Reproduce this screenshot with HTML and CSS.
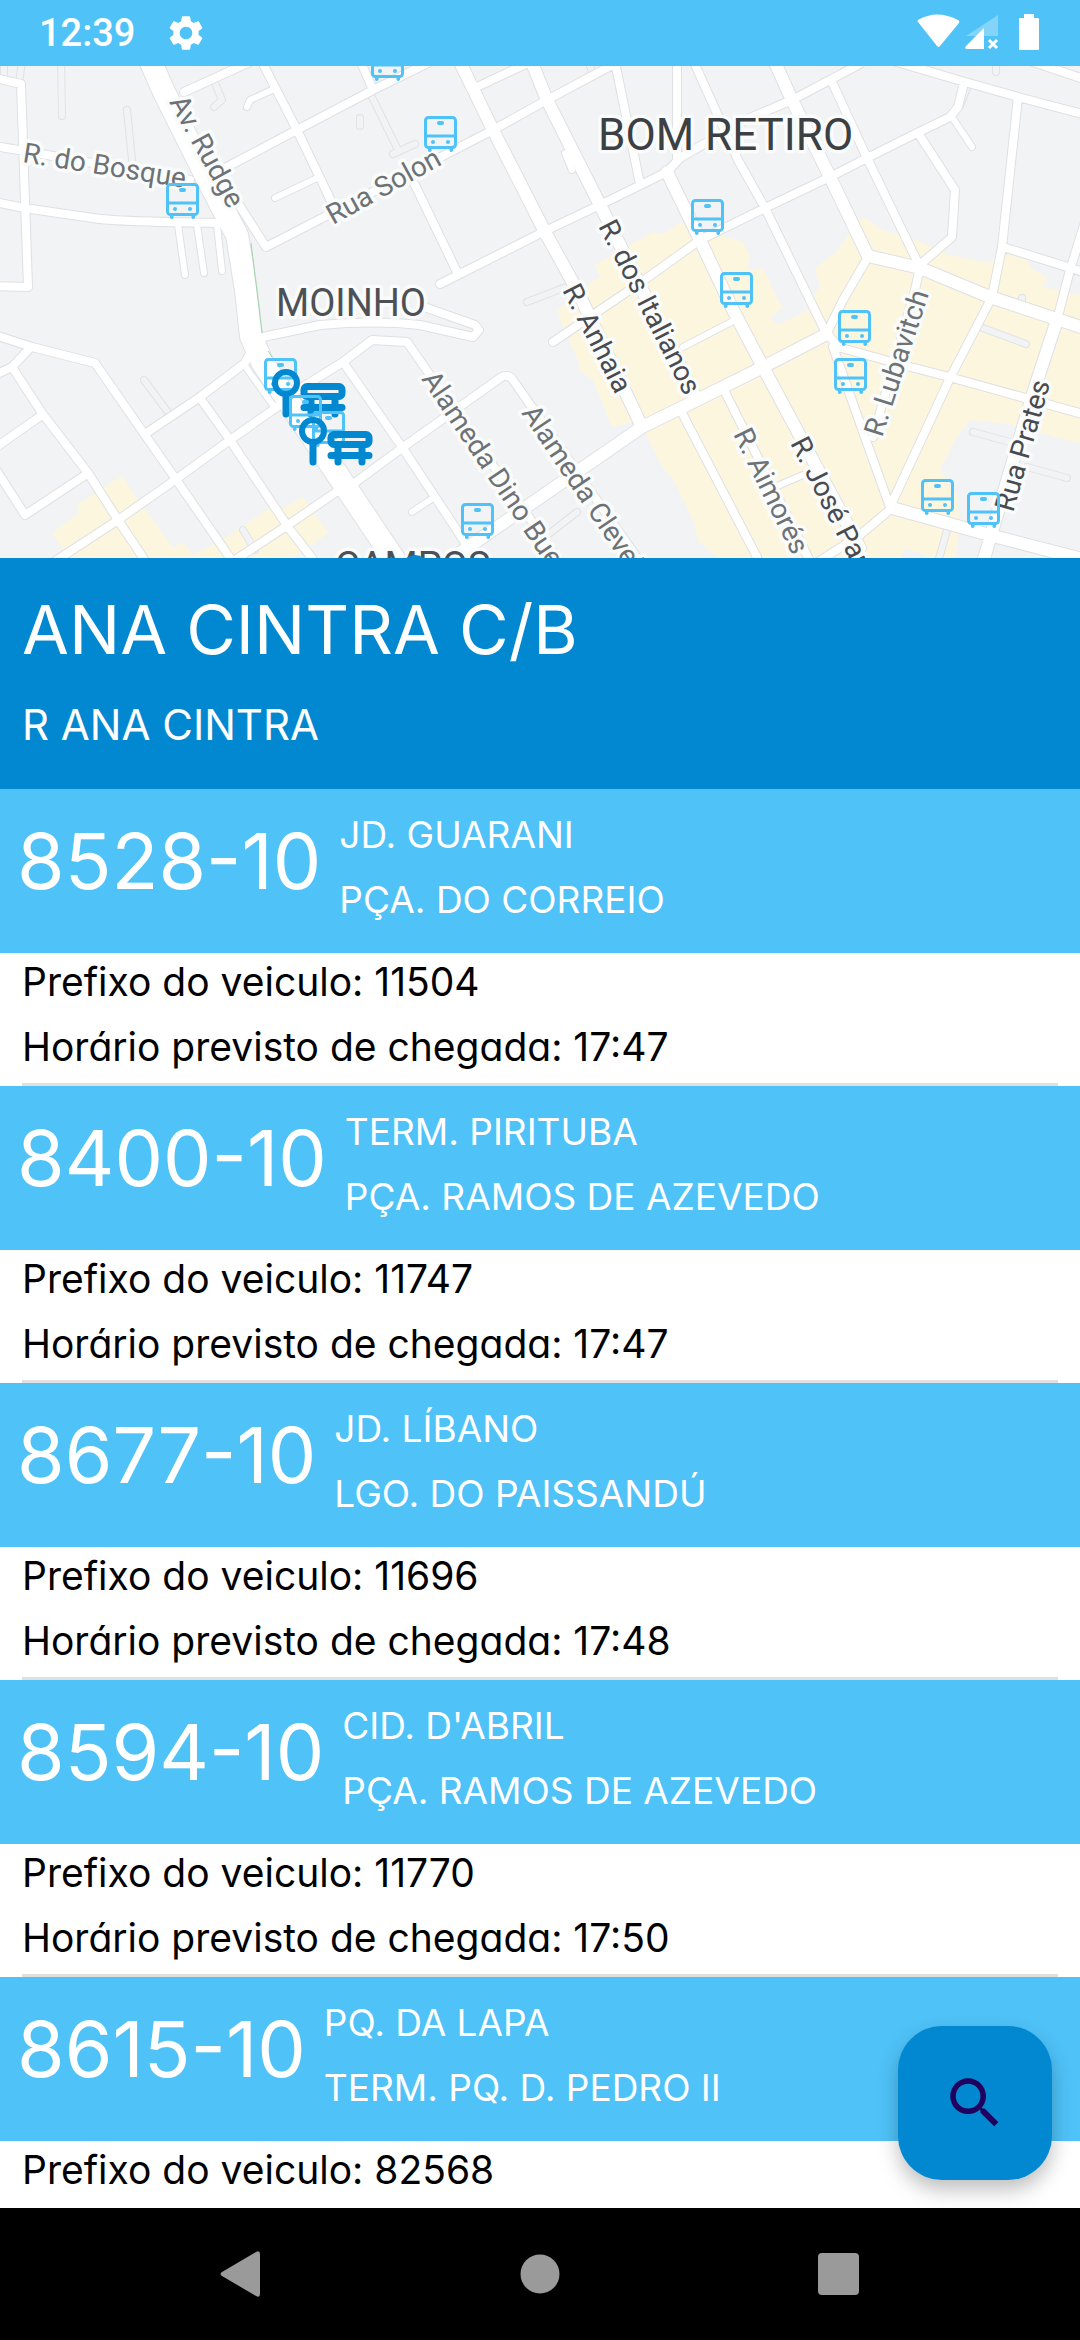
FILE: index.html
```html
<!DOCTYPE html>
<html lang="pt-BR">
<head>
<meta charset="utf-8">
<meta name="viewport" content="width=device-width, initial-scale=1">
<title>Ana Cintra C/B</title>
<link rel="stylesheet" href="styles.css">
</head>
<body>
<header class="status">
  <span class="clock">12:39</span>
  <svg class="gear" viewBox="0 0 24 24" aria-hidden="true"><path d="M19.14 12.94c.04-.3.06-.61.06-.94 0-.32-.02-.64-.07-.94l2.03-1.58c.18-.14.23-.41.12-.61l-1.92-3.32c-.12-.22-.37-.29-.59-.22l-2.39.96c-.5-.38-1.03-.7-1.62-.94l-.36-2.54c-.04-.24-.24-.41-.48-.41h-3.84c-.24 0-.43.17-.47.41l-.36 2.54c-.59.24-1.13.57-1.62.94l-2.39-.96c-.22-.08-.47 0-.59.22L2.74 8.87c-.12.21-.08.47.12.61l2.03 1.58c-.05.3-.09.63-.09.94s.02.64.07.94l-2.03 1.58c-.18.14-.23.41-.12.61l1.92 3.32c.12.22.37.29.59.22l2.39-.96c.5.38 1.03.7 1.62.94l.36 2.54c.05.24.24.41.48.41h3.84c.24 0 .44-.17.47-.41l.36-2.54c.59-.24 1.13-.56 1.62-.94l2.39.96c.22.08.47 0 .59-.22l1.92-3.32c.12-.22.07-.47-.12-.61l-2.01-1.58zM12 15.6c-1.98 0-3.6-1.62-3.6-3.6s1.62-3.6 3.6-3.6 3.6 1.62 3.6 3.6-1.62 3.6-3.6 3.6z"/></svg>
  <svg class="signals" viewBox="0 0 124 38" aria-hidden="true">
    <path d="M1 8Q0 7 1 6Q20-5 41 6Q43 7 42 9L23 32Q21.500 34 20 32Z"/>
    <path opacity=".3" d="M81 2V22H49L78 3Q81 0 81 2Z"/>
    <path class="cut" d="M49 2H81L49 34ZM67 22H82V36H67Z"/>
    <path d="M67 14V35H50Q47 35 49 32Z"/>
    <path class="cross" d="M72 26L80 34M80 26L72 34"/>
    <path d="M107 0H117V4H121Q122 4 122 5V35Q122 36 121 36H103Q102 36 102 35V5Q102 4 103 4H107Z"/>
  </svg>
</header>
<main class="content">
  <svg class="map" viewBox="0 66 1080 492" role="img" aria-label="Mapa">
    <defs>
      <g id="lanes">
        <path d="M61 60L62 116M127 110L132 160M22 60L19 84M4 60V80M215 83L222 100L214 107M372 97L398 150M393 154L415 144M144 380L170 415M243 530L255 550M527 302L566 287M545 537L577 512M360 118V126M980 327L1026 344M973 432L1010 442M1027 467L1067 478M996 62V72M967 88L960 106M1022 298V306M948 527L938 562M590 66L592 72"/>
      </g>
      <g id="small">
        <path d="M178 225L185 275M197 225L204 273M217 225L222 271M247 107L250 100L272 90M275 198L315 179M565 153L572 170M952 117L972 147M245 366L275 408M412 512L433 498M683 347L735 320M775 487L803 475"/>
      </g>
      <g id="streets">
        <path d="M-5 78L21 84L28 287L-5 286M-5 146L24 151L190 180M-5 202L24 208L93 218Q115 222 235 223M184 92L250 62M225 168L295 131L373 90L430 62M262 62L297 130L333 205M360 60L373 90M236 200L266 247L493 130L547 100L616 63M477 87L530 62M415 185L458 274M440 284L458 275L545 231L600 205L667 172L680 158L745 120L792 100L860 64M615 62L640 184M677 60V158M693 60L738 160L765 208L827 335M553 342L640 283L700 240L765 208L830 177L867 158L917 133L950 117L958 107L964 83M832 82L867 158L920 267L915 290L873 437M918 133L955 190L952 237L922 263M890 60L965 82L1018 97L1090 116M1030 61L1090 81M1018 97L1002 247L992 297L950 378L890 507M1003 247L1090 274M1085 222L1070 270L1057 320M868 257L843 300L827 333L838 347L903 365L953 378L1090 416M833 347L867 443L890 507M725 392L812 565M682 413L757 557M818 562L860 535L892 508"/>
        <path d="M-5 335L32 347L95 363L145 435L175 478L235 565M-5 375L12 367L30 348M12 367L42 413L88 473L118 520L148 565M-5 448L42 415M-5 468L25 515L87 474M145 434L200 397L245 363L252 350M54 562L118 520L175 480L230 440L277 407M200 398L230 440L288 527L315 562M235 560L288 525L342 488M263 337L320 325Q375 320 420 325L473 337L479 330L475 325L427 308M290 395L343 362L372 340L407 342L430 375L560 562M343 362L402 447L470 550M345 490L402 448L500 378Q508 373 513 380L640 562"/>
      </g>
      <g id="roads">
        <path d="M458 58L493 130L545 232L577 290L642 427M530 58L547 100L600 205L697 400M667 172L700 240L733 310L763 367L860 548M773 58L792 100L830 177L868 256L920 268L990 297L1090 330M445 563L590 463L642 427L697 400L763 367L825 335M1057 320L1035 387L983 562M892 508L997 537L1090 561"/>
      </g>
      <g id="avenue">
        <path d="M149 58L164 92L212 188L237 235L246 290L251 336L262 362L396 562"/>
      </g>
      <symbol id="bus" viewBox="0 0 33 36">
        <rect class="line" x="1.500" y="1.500" width="30" height="30" rx="3"/>
        <path class="line" d="M2 20H31"/>
        <rect x="13" y="5" width="7" height="4" rx="2"/>
        <circle cx="9" cy="26" r="2"/><circle cx="24" cy="26" r="2"/>
        <path d="M4 32H7.500V35Q5.500 37 4 35ZM25.500 32H29V35Q27 37 25.500 35Z"/>
      </symbol>
      <symbol id="stop" viewBox="0 0 75 50">
        <circle class="line thin" cx="14" cy="14" r="11"/>
        <path class="line" d="M14 27V45M32 38.500H70M39 32V45M63 32V45"/>
        <rect class="line" x="32" y="17.500" width="38" height="10" rx="3"/>
      </symbol>
    </defs>

    <rect class="land" y="66" width="1080" height="492"/>
    <path class="shops" d="M52 533L80 512 76 506 95 493 122 476 137 498 173 548 183 542 193 555 202 550 222 540 270 508 284 508 303 497 328 533 290 560H70Z"/>
    <path class="shops" d="M590 283L600 277 595 265 653 232 663 234 685 220 700 238 720 235 743 242 750 257 747 270 763 268 778 300 783 307 770 318 778 325 808 310 817 290 820 287 815 268 835 253 850 233 863 217 883 230 917 240 950 255 990 263 1003 252 1028 260 1030 268 1047 277 1043 287 1080 295V560H720L697 540 695 525 675 483 660 463 647 437 642 420 612 427 593 380 578 370 580 365 568 337 560 320 557 310Z"/>
    <path class="land" d="M970 420L1015 425 1055 437 1080 443V560H955L960 527 957 495 940 470 955 440ZM900 560L905 548 925 555 930 560Z"/>

    <g class="lane-case"><use href="#lanes"/></g>
    <g class="lane-fill"><use href="#lanes"/></g>
    <g class="case small"><use href="#small"/></g>
    <g class="case streets"><use href="#streets"/></g>
    <g class="case roads"><use href="#roads"/></g>
    <g class="case avenue"><use href="#avenue"/></g>
    <g class="fill small"><use href="#small"/></g>
    <g class="fill streets"><use href="#streets"/></g>
    <g class="fill roads"><use href="#roads"/></g>
    <g class="fill avenue"><use href="#avenue"/></g>
    <path class="park" d="M251 243L258 300L262 333M268 351L272 357"/>

    <g class="label">
      <text class="district" x="598" y="150">BOM RETIRO</text>
      <text class="quarter" x="276" y="316">MOINHO</text>
      <text class="quarter strong" x="335" y="579">CAMPOS</text>
      <text transform="translate(22 162) rotate(9)">R. do Bosque</text>
      <text transform="translate(169 102) rotate(61)">Av. Rudge</text>
      <text transform="translate(333 225) rotate(-29)">Rua Solon</text>
      <text class="strong" transform="translate(598 226) rotate(63)">R. dos Italianos</text>
      <text class="strong" transform="translate(562 290) rotate(63)">R. Anhaia</text>
      <text transform="translate(421 379) rotate(56)">Alameda Dino Bueno</text>
      <text transform="translate(521 413) rotate(56)">Alameda Cleveland</text>
      <text transform="translate(882 438) rotate(-72)">R. Lubavitch</text>
      <text transform="translate(733 434) rotate(64)">R. Aimorés</text>
      <text class="strong" transform="translate(790 443) rotate(63)">R. José Paulino</text>
      <text class="strong" transform="translate(1013 513) rotate(-74)">Rua Prates</text>
    </g>

    <g class="buses">
      <use href="#bus" x="371" y="45" width="33" height="36"/>
      <use href="#bus" x="424" y="116" width="33" height="36"/>
      <use href="#bus" x="166" y="183" width="33" height="36"/>
      <use href="#bus" x="691" y="199" width="33" height="36"/>
      <use href="#bus" x="720" y="272" width="33" height="36"/>
      <use href="#bus" x="838" y="310" width="33" height="36"/>
      <use href="#bus" x="834" y="358" width="33" height="36"/>
      <use href="#bus" x="921" y="479" width="33" height="36"/>
      <use href="#bus" x="967" y="492" width="33" height="36"/>
      <use href="#bus" x="461" y="503" width="33" height="36"/>
      <use href="#bus" x="264" y="358" width="33" height="36"/>
    </g>
    <g class="stops"><use href="#stop" x="272" y="369" width="75" height="50"/></g>
    <g class="buses">
      <use href="#bus" x="289" y="395" width="33" height="36"/>
      <use href="#bus" x="312" y="411" width="33" height="36"/>
    </g>
    <g class="stops">
      <use href="#stop" x="299" y="417" width="75" height="50"/>
      <circle class="dot" cx="415" cy="569" r="14"/>
    </g>
  </svg>

  <section class="place">
    <h1>ANA CINTRA C/B</h1>
    <p>R ANA CINTRA</p>
  </section>

  <section class="arrivals">
    <article>
      <div class="route"><h2>8528-10</h2><p>JD. GUARANI<br>PÇA. DO CORREIO</p></div>
      <div class="bus-info"><p>Prefixo do veiculo: 11504</p><p>Horário previsto de chegada: 17:47</p></div>
    </article>
    <article>
      <div class="route"><h2>8400-10</h2><p>TERM. PIRITUBA<br>PÇA. RAMOS DE AZEVEDO</p></div>
      <div class="bus-info"><p>Prefixo do veiculo: 11747</p><p>Horário previsto de chegada: 17:47</p></div>
    </article>
    <article>
      <div class="route"><h2>8677-10</h2><p>JD. LÍBANO<br>LGO. DO PAISSANDÚ</p></div>
      <div class="bus-info"><p>Prefixo do veiculo: 11696</p><p>Horário previsto de chegada: 17:48</p></div>
    </article>
    <article>
      <div class="route"><h2>8594-10</h2><p>CID. D'ABRIL<br>PÇA. RAMOS DE AZEVEDO</p></div>
      <div class="bus-info"><p>Prefixo do veiculo: 11770</p><p>Horário previsto de chegada: 17:50</p></div>
    </article>
    <article>
      <div class="route"><h2>8615-10</h2><p>PQ. DA LAPA<br>TERM. PQ. D. PEDRO II</p></div>
      <div class="bus-info last"><p>Prefixo do veiculo: 82568</p></div>
    </article>
  </section>

  <button class="fab" type="button" aria-label="Buscar">
    <svg viewBox="0 0 24 24" aria-hidden="true"><path d="M15.500 14h-.79l-.28-.27C15.410 12.590 16 11.110 16 9.500 16 5.910 13.090 3 9.500 3S3 5.910 3 9.500 5.910 16 9.500 16c1.610 0 3.090-.59 4.230-1.570l.27.28v.79l5 4.990L20.490 19l-4.990-5zm-6 0C7.010 14 5 11.990 5 9.500S7.010 5 9.500 5 14 7.010 14 9.500 11.990 14 9.500 14z"/></svg>
  </button>
</main>
<nav class="system">
  <button type="button" aria-label="Voltar"><svg viewBox="0 0 46 46"><path d="M5 21L39 1Q43-1 43 3V43Q43 47 39 45L5 25Q2 23 5 21Z"/></svg></button>
  <button type="button" aria-label="Início"><svg viewBox="0 0 46 46"><circle cx="23" cy="23" r="19.500"/></svg></button>
  <button type="button" aria-label="Recentes"><svg viewBox="0 0 46 46"><rect x="1" y="2" width="41" height="42" rx="4"/></svg></button>
</nav>
</body>
</html>
```

FILE: styles.css
```css
* { box-sizing: border-box; }

body {
  margin: 0;
  height: 100vh;
  display: flex;
  flex-direction: column;
  background: #fff;
  color: #000;
  font-family: Inter, "Open Sans", sans-serif;
  font-feature-settings: "cv11";
}

h1, h2, p { margin: 0; font-weight: 400; }
button { border: 0; padding: 0; }

/* status bar */
.status {
  flex: none;
  display: flex;
  align-items: center;
  height: 66px;
  padding: 0 39px;
  background: #4fc2f8;
  color: #fff;
}
.status svg { fill: #fff; }
.clock { font: 500 38px/66px Roboto, sans-serif; }
.gear { width: 42px; height: 42px; margin-left: 30px; }
.signals { width: 124px; height: 38px; margin-left: auto; }
.status .cut { fill: #4fc2f8; fill-opacity: 0; }
.cross { stroke: #fff; stroke-width: 3; }

/* map */
.content {
  position: relative;
  flex: 1;
  min-height: 0;
  overflow: hidden;
}
.map { display: block; width: 100%; }
.land { fill: #f1f3f5; }
.shops { fill: #fdf6df; }
.park { fill: none; stroke: #9fd3ac; stroke-width: 1; }
.case, .fill, .lane-case, .lane-fill {
  fill: none;
  stroke-linecap: round;
  stroke-linejoin: round;
}
.lane-case { stroke: #e1e2e5; stroke-width: 8; }
.lane-fill { stroke: #f1f3f5; stroke-width: 6; }
.case { stroke: #dfe0e3; }
.fill { stroke: #fff; }
.case.small { stroke-width: 8; }
.fill.small { stroke-width: 6; }
.case.streets { stroke-width: 10; }
.fill.streets { stroke-width: 8; }
.case.roads { stroke-width: 14; }
.fill.roads { stroke-width: 12; }
.case.avenue { stroke-width: 24; }
.fill.avenue { stroke-width: 22; }
.label {
  font: 400 28px Roboto, sans-serif;
  fill: #6d7276;
  stroke: #fafbfb;
  stroke-width: 7;
  stroke-linejoin: round;
  paint-order: stroke;
}
.label .strong { fill: #484b50; }
.label .district { font-size: 44px; fill: #3c4043; }
.label .quarter { font-size: 38px; fill: #4d5156; }
.buses { fill: #4fc2f8; }
.buses, .stops { stroke: none; }
.line { fill: none; stroke: #4fc2f8; stroke-width: 3; }
#stop .line {
  stroke: #0288d1;
  stroke-width: 7;
  stroke-linecap: round;
}
#stop .thin { stroke-width: 6; }
.dot { fill: #0288d1; }

/* stop header */
.place {
  padding: 19px 22px 21px;
  background: #0288d1;
  color: #fff;
}
.place h1 { font-size: 68px; line-height: 105px; }
.place p { font-size: 42px; line-height: 86px; }

/* arrivals */
.route {
  display: flex;
  align-items: center;
  gap: 18px;
  height: 164px;
  padding: 0 17px;
  background: #4fc2f8;
  color: #fff;
}
.route h2 { font-size: 77px; line-height: 130px; padding-bottom: 20px; }
.route p { font-size: 37px; line-height: 65px; padding-bottom: 8px; }
.bus-info {
  margin: 0 22px;
  border-bottom: 3px solid #e0e0e0;
}
.bus-info p { font-size: 39px; line-height: 57px; padding-bottom: 8px; }
.bus-info.last { border-bottom: 0; }

.fab {
  position: absolute;
  right: 28px;
  bottom: 28px;
  display: grid;
  place-items: center;
  width: 154px;
  height: 154px;
  border-radius: 44px;
  background: #0288d1;
  box-shadow: 0 10px 20px rgba(0, 0, 0, .25);
}
.fab svg { width: 66px; height: 66px; fill: #22005d; }

/* system navigation */
.system {
  flex: none;
  display: flex;
  justify-content: center;
  height: 132px;
  background: #000;
}
.system button {
  flex: 0 1 300px;
  display: grid;
  place-items: center;
  background: none;
}
.system svg { width: 46px; height: 46px; fill: #9a9a9a; }
```
